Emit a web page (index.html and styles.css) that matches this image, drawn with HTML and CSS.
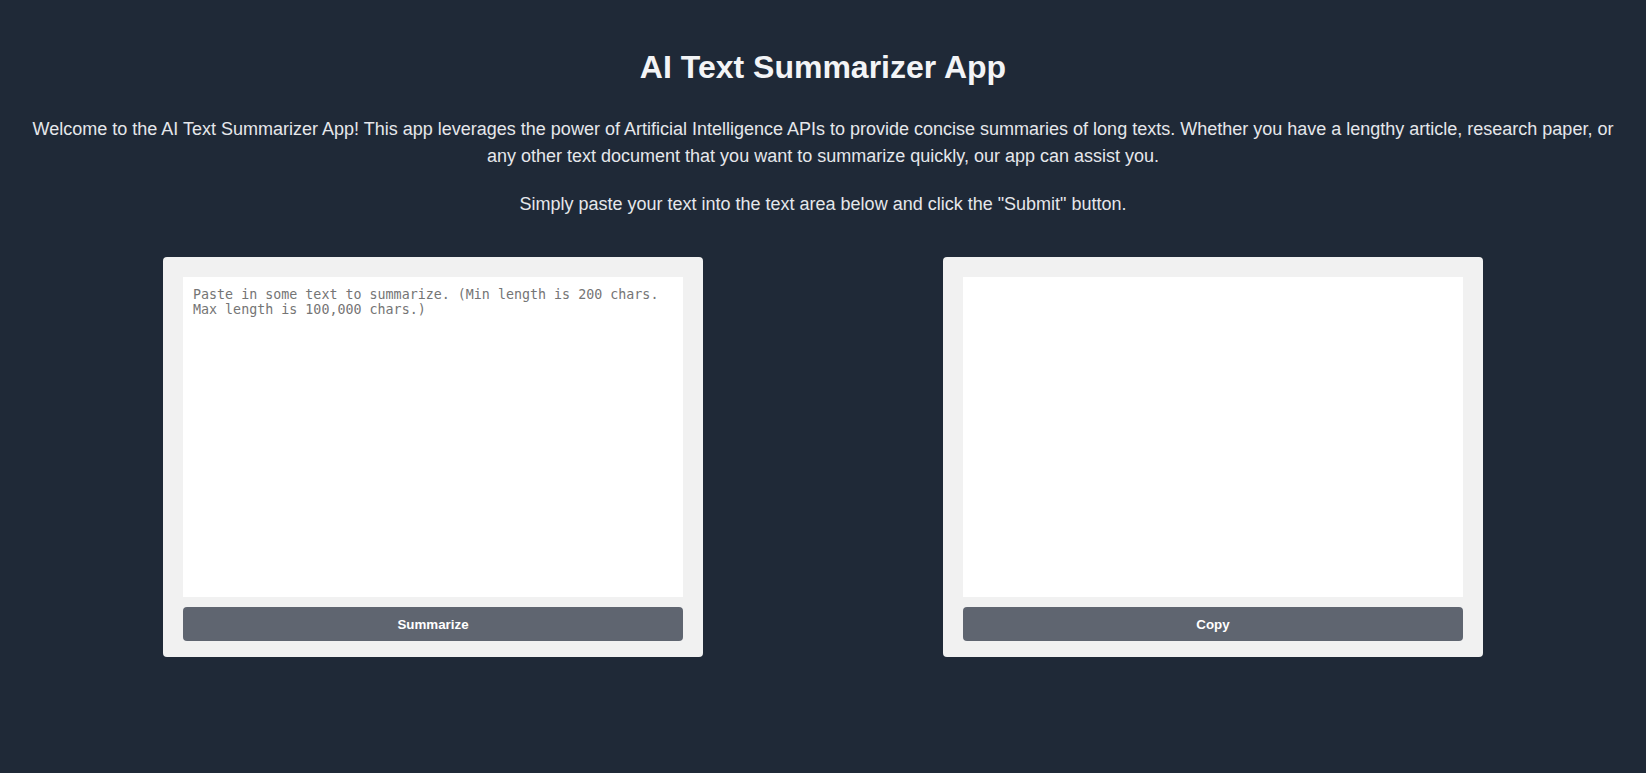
FILE: index.html
```html
<!DOCTYPE html>
<html lang="en">
<head>
<meta charset="utf-8">
<title>AI Text Summarizer App</title>
<link rel="stylesheet" href="styles.css">
</head>
<body>
<main class="page">
  <h1 class="title">AI Text Summarizer App</h1>
  <p class="intro">Welcome to the AI Text Summarizer App! This app leverages the power of Artificial Intelligence APIs to provide concise summaries of long texts. Whether you have a lengthy article, research paper, or any other text document that you want to summarize quickly, our app can assist you.</p>
  <p class="intro">Simply paste your text into the text area below and click the "Submit" button.</p>
  <section class="panels">
    <div class="card">
      <textarea class="box" placeholder="Paste in some text to summarize. (Min length is 200 chars. Max length is 100,000 chars.)"></textarea>
      <button class="btn" type="button">Summarize</button>
    </div>
    <div class="card">
      <textarea class="box" readonly></textarea>
      <button class="btn" type="button">Copy</button>
    </div>
  </section>
</main>
</body>
</html>
```

FILE: styles.css
```css
html, body {
  margin: 0;
  padding: 0;
  background: #1f2937;
  height: 100%;
}

body {
  font-family: "Liberation Sans", Arial, sans-serif;
  color: #e5e7eb;
}

.page {
  padding: 27px 24px 0;
  display: flex;
  flex-direction: column;
  align-items: center;
}

.title {
  margin: 21px 0 30px;
  font-size: 32px;
  font-weight: 700;
  line-height: 1.2;
  color: #f3f4f6;
  text-align: center;
}

.intro {
  margin: 0 0 21px;
  font-size: 18px;
  line-height: 27px;
  text-align: center;
}

.panels {
  display: flex;
  justify-content: center;
  gap: 240px;
  margin-top: 18px;
}

.card {
  width: 540px;
  box-sizing: border-box;
  background: #f1f1f1;
  border-radius: 4px;
  padding: 20px 20px 16px;
  display: flex;
  flex-direction: column;
  gap: 10px;
}

.box {
  display: block;
  width: 100%;
  height: 320px;
  box-sizing: border-box;
  border: none;
  outline: none;
  resize: none;
  padding: 10px;
  margin: 0;
  background: #ffffff;
  font-family: "DejaVu Sans Mono", monospace;
  font-size: 13.333px;
  color: #333;
}

.box::placeholder {
  color: #757575;
}

.btn {
  height: 34px;
  border: none;
  border-radius: 4px;
  background: #5f6570;
  color: #ffffff;
  font-family: "Liberation Sans", Arial, sans-serif;
  font-size: 13.333px;
  font-weight: 700;
  cursor: pointer;
}
```
